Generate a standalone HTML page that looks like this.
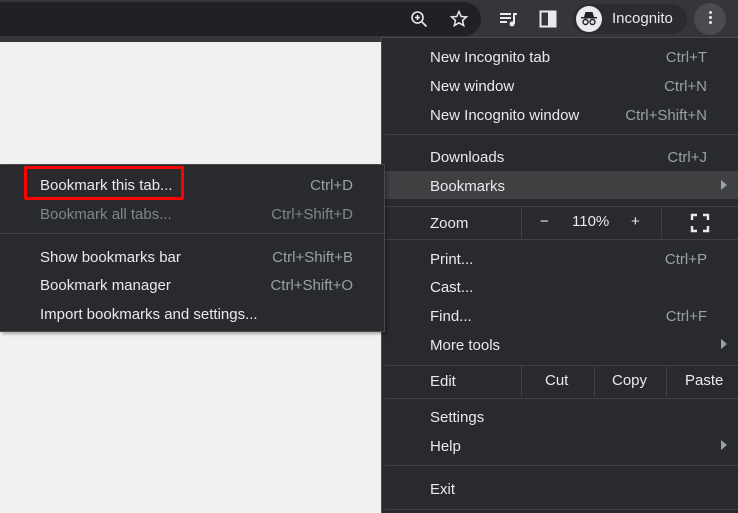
<!DOCTYPE html>
<html><head><style>
*{margin:0;padding:0;box-sizing:border-box}
body{width:738px;height:513px;overflow:hidden;background:#f1f1f1;font-family:"Liberation Sans",sans-serif;font-size:15px;color:#e8eaed;position:relative}
.a{position:absolute}
.t{position:absolute;white-space:nowrap;line-height:16px;margin-top:1px}
.s{position:absolute;white-space:nowrap;line-height:16px;margin-top:1px;color:#9aa0a6;text-align:right}
.sep{position:absolute;height:1px;background:#3f4043}
.vs{position:absolute;width:1px;background:#3f4043}
.arr{position:absolute;width:0;height:0;border-left:6px solid #9aa0a6;border-top:5px solid transparent;border-bottom:5px solid transparent}
</style></head><body>
<div class="a" style="left:0;top:0;width:738px;height:42px;background:#35363a"></div>
<div class="a" style="left:0;top:2px;width:481px;height:34px;background:#202124;border-radius:0 17px 17px 0"></div>
<svg class="a" style="left:409px;top:9px" width="20" height="20" viewBox="0 0 20 20" fill="none" stroke="#e8eaed" stroke-width="1.6"><circle cx="8.5" cy="8.5" r="5.5"/><path d="M12.5 12.5l5 5M8.5 6v5M6 8.5h5"/></svg>
<svg class="a" style="left:449px;top:9px" width="20" height="20" viewBox="0 0 20 20" fill="none" stroke="#e8eaed" stroke-width="1.5"><path d="M10 2.5l2.2 5 5.3.4-4 3.5 1.2 5.2L10 13.8l-4.7 2.8 1.2-5.2-4-3.5 5.3-.4z"/></svg>
<svg class="a" style="left:498px;top:9px" width="22" height="20" viewBox="0 0 22 20" fill="#e8eaed"><rect x="2" y="4" width="11" height="2"/><rect x="2" y="8" width="11" height="2"/><rect x="2" y="12" width="7" height="2"/><rect x="15" y="4" width="4" height="2"/><rect x="15" y="4" width="2" height="11"/><circle cx="14" cy="15" r="2.5"/></svg>
<svg class="a" style="left:538px;top:9px" width="20" height="20" viewBox="0 0 20 20"><rect x="2.5" y="2.5" width="15" height="15" fill="none" stroke="#e8eaed" stroke-width="2"/><rect x="10" y="3" width="7" height="14" fill="#e8eaed"/></svg>
<div class="a" style="left:573px;top:4px;width:114px;height:30px;background:#2b2c2f;border-radius:15px"></div>
<div class="a" style="left:576px;top:6px;width:26px;height:26px;background:#e8eaed;border-radius:50%"></div>
<svg class="a" style="left:579px;top:9px" width="20" height="20" viewBox="0 0 20 20" fill="#202124"><path d="M5 8h10l-1.5-5h-7z"/><rect x="2" y="8" width="16" height="1.5"/><circle cx="6.5" cy="13" r="2.5" fill="none" stroke="#202124" stroke-width="1.4"/><circle cx="13.5" cy="13" r="2.5" fill="none" stroke="#202124" stroke-width="1.4"/></svg>
<div class="t" style="left:612px;top:10px">Incognito</div>
<div class="a" style="left:694px;top:3px;width:32px;height:32px;background:#4a4b4e;border-radius:50%"></div>
<div class="a" style="left:709px;top:11px;width:3px;height:3px;background:#e8eaed;border-radius:50%;box-shadow:0 5px 0 #e8eaed,0 10px 0 #e8eaed"></div>

<div class="a" style="left:381px;top:37px;width:357px;height:476px;background:#292a2d;border-left:1px solid #4a4b4e;border-top:1px solid #4a4b4e"></div>
<div class="a" style="left:382px;top:171px;width:356px;height:28px;background:#3f4042"></div>
<div class="t" style="left:430px;top:49px">New Incognito tab</div><div class="s" style="right:31px;top:49px">Ctrl+T</div>
<div class="t" style="left:430px;top:78px">New window</div><div class="s" style="right:31px;top:78px">Ctrl+N</div>
<div class="t" style="left:430px;top:107px">New Incognito window</div><div class="s" style="right:31px;top:107px">Ctrl+Shift+N</div>
<div class="sep" style="left:385px;top:134px;width:353px"></div>
<div class="t" style="left:430px;top:149px">Downloads</div><div class="s" style="right:31px;top:149px">Ctrl+J</div>
<div class="t" style="left:430px;top:178px">Bookmarks</div><div class="arr" style="left:721px;top:180px"></div>
<div class="sep" style="left:385px;top:206px;width:353px"></div>
<div class="t" style="left:430px;top:215px">Zoom</div>
<div class="vs" style="left:521px;top:207px;height:31px"></div>
<div class="t" style="left:540px;top:213px">−</div>
<div class="t" style="left:572px;top:213px">110%</div>
<div class="t" style="left:631px;top:213px">+</div>
<div class="vs" style="left:661px;top:207px;height:31px"></div>
<svg class="a" style="left:690px;top:213px" width="20" height="20" viewBox="0 0 20 20" fill="none" stroke="#e8eaed" stroke-width="2.4"><path d="M2 7V2h5M13 2h5v5M18 13v5h-5M7 18H2v-5"/></svg>
<div class="sep" style="left:385px;top:239px;width:353px"></div>
<div class="t" style="left:430px;top:251px">Print...</div><div class="s" style="right:31px;top:251px">Ctrl+P</div>
<div class="t" style="left:430px;top:279px">Cast...</div>
<div class="t" style="left:430px;top:308px">Find...</div><div class="s" style="right:31px;top:308px">Ctrl+F</div>
<div class="t" style="left:430px;top:337px">More tools</div><div class="arr" style="left:721px;top:339px"></div>
<div class="sep" style="left:385px;top:365px;width:353px"></div>
<div class="t" style="left:430px;top:373px">Edit</div>
<div class="vs" style="left:521px;top:366px;height:31px"></div>
<div class="t" style="left:545px;top:372px">Cut</div>
<div class="vs" style="left:594px;top:366px;height:31px"></div>
<div class="t" style="left:612px;top:372px">Copy</div>
<div class="vs" style="left:666px;top:366px;height:31px"></div>
<div class="t" style="left:685px;top:372px">Paste</div>
<div class="sep" style="left:385px;top:398px;width:353px"></div>
<div class="t" style="left:430px;top:409px">Settings</div>
<div class="t" style="left:430px;top:438px">Help</div><div class="arr" style="left:721px;top:440px"></div>
<div class="sep" style="left:385px;top:465px;width:353px"></div>
<div class="t" style="left:430px;top:481px">Exit</div>
<div class="sep" style="left:385px;top:509px;width:353px"></div>

<div class="a" style="left:0;top:164px;width:385px;height:168px;background:#292a2d;border:1px solid #4a4b4e;border-left:none;box-shadow:2px 2px 3px rgba(0,0,0,.3)"></div>
<div class="a" style="left:24px;top:166px;width:160px;height:34px;border:3px solid #ff0000;border-radius:2px"></div>
<div class="t" style="left:40px;top:177px">Bookmark this tab...</div><div class="s" style="left:200px;width:153px;top:177px">Ctrl+D</div>
<div class="t" style="left:40px;top:206px;color:#80868b">Bookmark all tabs...</div><div class="s" style="left:200px;width:153px;top:206px;color:#80868b">Ctrl+Shift+D</div>
<div class="sep" style="left:0;top:233px;width:384px"></div>
<div class="t" style="left:40px;top:249px">Show bookmarks bar</div><div class="s" style="left:200px;width:153px;top:249px">Ctrl+Shift+B</div>
<div class="t" style="left:40px;top:277px">Bookmark manager</div><div class="s" style="left:200px;width:153px;top:277px">Ctrl+Shift+O</div>
<div class="t" style="left:40px;top:306px">Import bookmarks and settings...</div>
</body></html>
